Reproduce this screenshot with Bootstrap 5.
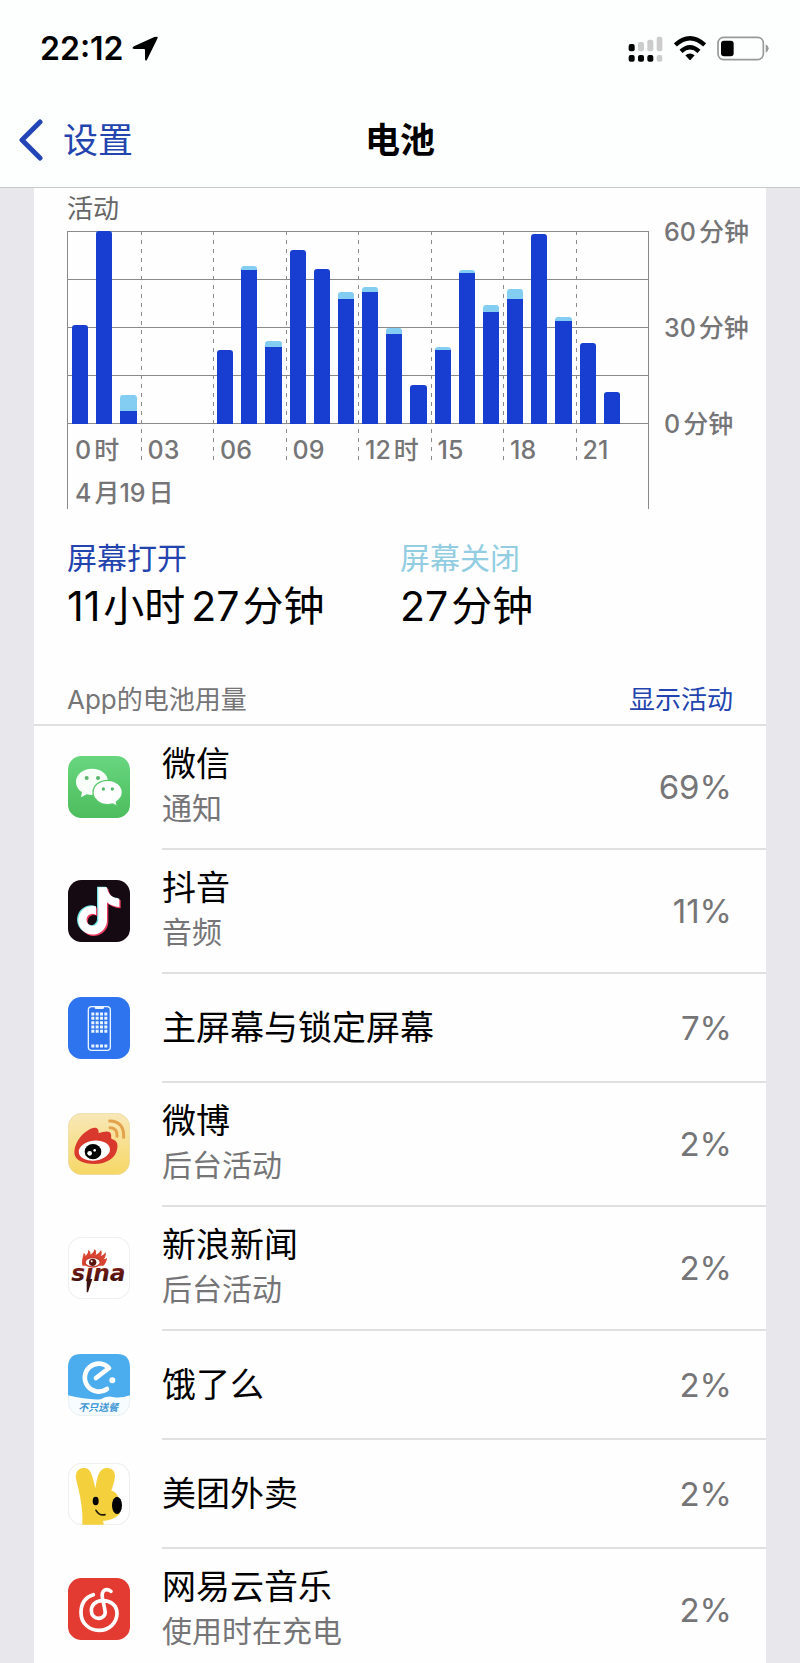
<!DOCTYPE html>
<html lang="zh-CN">
<head>
<meta charset="utf-8">
<meta name="viewport" content="width=device-width, initial-scale=1">
<title>电池</title>
<link href="https://cdn.jsdelivr.net/npm/bootstrap@5.3.0/dist/css/bootstrap.min.css" rel="stylesheet">
<style>
  :root { --on: #173ed0; --off: #84cdf2; --rule: #e0e0e1; --grid: #8a8a8c; --muted: #757577; --link: #2344ae; }
  body { background: #e8e8ec; color: #000; font-family: Inter, "Noto Sans CJK SC", sans-serif; font-size: 26px; line-height: 32px; }
  a { color: var(--link); text-decoration: none; }
  svg { display: block; flex: none; }
  .top-area { background: #fdfffe; border-bottom: 1px solid #c9c9ca; }
  .status { height: 93px; padding: 4px 31px 0 40px; }
  .status-icons { gap: 11px; }
  .clock { font-size: 32px; font-weight: 600; }
  .titlebar { height: 94px; padding: 0 19px; font-size: 35px; line-height: 46px; }
  .titlebar h1 { font-size: 35px; line-height: 46px; font-weight: 700; }
  .sheet { background: #fefefe; margin: 0 34px; }
  .dim { color: var(--muted); }
  .n { margin-right: 3px; }
  .n-in { margin-left: 6px; }

  .chart-wrap { padding-left: 33px; }
  .chart-title { padding-top: 3px; font-size: 26px; line-height: 36px; margin: 0 0 4px; color: #666; font-weight: 400; }
  .frame { border: solid var(--grid); border-width: 0 1px; }
  .slot { flex: 1 1 0; }
  .slot + .slot { background: repeating-linear-gradient(to bottom, var(--grid) 0 4px, transparent 4px 9px) left top / 1px 100% no-repeat; }
  .plot { height: 193px; background: repeating-linear-gradient(to bottom, var(--grid) 0 1px, transparent 1px 48px); }
  .hour { flex: 1 1 0; padding: 0 4px; height: 100%; }
  .bar { background: var(--off); border-radius: 3px 3px 0 0; overflow: hidden; }
  .bar i { display: block; background: var(--on); }
  .tick, .date, .scale { font-size: 25px; font-weight: 500; }
  .tick { padding: 13px 0 0 7px; line-height: 26px; white-space: nowrap; }
  .date { padding: 14px 0 0 7px; }
  .scale { width: 117px; padding: 28px 0 0 15px; gap: 64px; white-space: nowrap; }

  .stats { padding: 27px 33px 0; }
  .stat-name { font-size: 30px; line-height: 44px; }
  .stat-value { font-size: 41px; line-height: 52px; }
  .list-head { padding: 52px 33px 8px; border-bottom: 2px solid var(--rule); }
  .app { padding-left: 34px; gap: 32px; }
  .app > svg { margin-bottom: 2px; }
  .app .body { min-height: 109px; padding-right: 34px; border-bottom: 2px solid var(--rule); }
  .app.tall .body { min-height: 124px; }
  .app.tall .app-text { padding-bottom: 4px; }
  .app:last-child .body { min-height: 114px; padding-top: 8px; border-bottom: 0; }
  .app:last-child > svg { margin-top: 8px; }
  .app-name { font-size: 34px; line-height: 46px; }
  .app-note { font-size: 30px; line-height: 42px; color: var(--muted); }
  .share { font-size: 33px; line-height: 46px; color: var(--muted); }
</style>
</head>
<body>
<header class="top-area">
  <div class="status d-flex align-items-center">
    <span class="clock">22:12</span>
    <svg class="ms-2" width="26" height="26" viewBox="0 0 78 78"><path d="M74 2Q79 1 76 8L45 71Q41 78 39 70V42Q39 39 36 39H6Q-3 37 6 31L67 3Z"/></svg>
    <div class="status-icons ms-auto d-flex align-items-center">
      <svg width="35" height="27" viewBox="0 0 105 81">
        <g fill="#ccc"><rect x="30" y="21" width="18" height="28" rx="6"/><rect x="58" y="14" width="18" height="35" rx="6"/><rect x="86" y="5" width="17" height="44" rx="6"/><rect x="86" y="60" width="17" height="20" rx="6"/></g>
        <rect x="2" y="27" width="18" height="22" rx="6"/><rect x="2" y="60" width="18" height="20" rx="6"/><rect x="30" y="60" width="18" height="20" rx="6"/><rect x="58" y="60" width="18" height="20" rx="6"/>
      </svg>
      <svg width="32" height="25" viewBox="0 0 96 75"><g fill="none" stroke="#000" stroke-width="13"><path d="M4 27Q48-13 92 27"/><path d="M21 46Q48 21 75 46"/></g><path d="M34 58Q48 47 62 58L50 71Q48 73 46 71Z"/></svg>
      <svg width="52" height="25" viewBox="0 0 156 75"><rect x="3" y="4" width="136" height="67" rx="17" fill="none" stroke="#999" stroke-width="5"/><rect x="12" y="14" width="38" height="47" rx="9"/><path d="M146 25Q155 29 155 37T146 50Z" fill="#999"/></svg>
    </div>
  </div>
  <nav class="titlebar row g-0 align-items-center">
    <a href="#" class="col-4 d-flex align-items-center">
      <svg width="24" height="42" viewBox="0 0 24 42" class="me-3"><path d="M21 3 3 21 21 39" fill="none" stroke="#2344b4" stroke-width="5" stroke-linecap="round" stroke-linejoin="round"/></svg>
      <span class="ms-1">设置</span>
    </a>
    <h1 class="col-4 text-center m-0">电池</h1>
  </nav>
</header>

<main class="sheet">
  <section class="chart-wrap d-flex dim">
    <div class="flex-grow-1">
      <h2 class="chart-title">活动</h2>
      <div class="frame">
        <div class="d-flex">
          <div class="slot"><div class="plot d-flex">
            <div class="hour d-flex align-items-end"><div class="bar w-100" style="height:51.5%"><i style="height:100%"></i></div></div>
            <div class="hour d-flex align-items-end"><div class="bar w-100" style="height:100%"><i style="height:100%"></i></div></div>
            <div class="hour d-flex align-items-end"><div class="bar w-100 d-flex align-items-end" style="height:15%"><i class="w-100" style="height:44%"></i></div></div>
          </div><div class="tick"><span class="n">0</span>时</div></div>
          <div class="slot"><div class="plot"></div><div class="tick">03</div></div>
          <div class="slot"><div class="plot d-flex">
            <div class="hour d-flex align-items-end"><div class="bar w-100" style="height:38.3%"><i style="height:100%"></i></div></div>
            <div class="hour d-flex align-items-end"><div class="bar w-100 d-flex align-items-end" style="height:82%"><i class="w-100" style="height:97.6%"></i></div></div>
            <div class="hour d-flex align-items-end"><div class="bar w-100 d-flex align-items-end" style="height:43%"><i class="w-100" style="height:93%"></i></div></div>
          </div><div class="tick">06</div></div>
          <div class="slot"><div class="plot d-flex">
            <div class="hour d-flex align-items-end"><div class="bar w-100" style="height:90.2%"><i style="height:100%"></i></div></div>
            <div class="hour d-flex align-items-end"><div class="bar w-100" style="height:80.3%"><i style="height:100%"></i></div></div>
            <div class="hour d-flex align-items-end"><div class="bar w-100 d-flex align-items-end" style="height:68.3%"><i class="w-100" style="height:95%"></i></div></div>
          </div><div class="tick">09</div></div>
          <div class="slot"><div class="plot d-flex">
            <div class="hour d-flex align-items-end"><div class="bar w-100 d-flex align-items-end" style="height:70.8%"><i class="w-100" style="height:96.4%"></i></div></div>
            <div class="hour d-flex align-items-end"><div class="bar w-100 d-flex align-items-end" style="height:50%"><i class="w-100" style="height:93.4%"></i></div></div>
            <div class="hour d-flex align-items-end"><div class="bar w-100" style="height:20.2%"><i style="height:100%"></i></div></div>
          </div><div class="tick"><span class="n">12</span>时</div></div>
          <div class="slot"><div class="plot d-flex">
            <div class="hour d-flex align-items-end"><div class="bar w-100 d-flex align-items-end" style="height:39.8%"><i class="w-100" style="height:96%"></i></div></div>
            <div class="hour d-flex align-items-end"><div class="bar w-100 d-flex align-items-end" style="height:79.8%"><i class="w-100" style="height:98%"></i></div></div>
            <div class="hour d-flex align-items-end"><div class="bar w-100 d-flex align-items-end" style="height:61.8%"><i class="w-100" style="height:94.2%"></i></div></div>
          </div><div class="tick">15</div></div>
          <div class="slot"><div class="plot d-flex">
            <div class="hour d-flex align-items-end"><div class="bar w-100 d-flex align-items-end" style="height:69.7%"><i class="w-100" style="height:93.2%"></i></div></div>
            <div class="hour d-flex align-items-end"><div class="bar w-100" style="height:98.3%"><i style="height:100%"></i></div></div>
            <div class="hour d-flex align-items-end"><div class="bar w-100 d-flex align-items-end" style="height:55.6%"><i class="w-100" style="height:96.2%"></i></div></div>
          </div><div class="tick">18</div></div>
          <div class="slot"><div class="plot d-flex">
            <div class="hour d-flex align-items-end"><div class="bar w-100" style="height:42%"><i style="height:100%"></i></div></div>
            <div class="hour d-flex align-items-end"><div class="bar w-100" style="height:16.7%"><i style="height:100%"></i></div></div>
            <div class="hour"></div>
          </div><div class="tick">21</div></div>
        </div>
        <div class="date"><span class="n">4</span>月<span class="n">19</span>日</div>
      </div>
    </div>
    <div class="scale d-flex flex-column flex-shrink-0">
      <div><span class="n">60</span>分钟</div>
      <div><span class="n">30</span>分钟</div>
      <div><span class="n">0</span>分钟</div>
    </div>
  </section>

  <section class="stats row g-0">
    <div class="col-6">
      <div class="stat-name" style="color:var(--link)">屏幕打开</div>
      <div class="stat-value"><span class="n">11</span>小时<span class="n n-in">27</span>分钟</div>
    </div>
    <div class="col-6">
      <div class="stat-name" style="color:#92cde2">屏幕关闭</div>
      <div class="stat-value"><span class="n">27</span>分钟</div>
    </div>
  </section>

  <div class="list-head d-flex justify-content-between">
    <span class="dim">App的电池用量</span>
    <a href="#">显示活动</a>
  </div>

  <ul class="list-unstyled m-0">
    <li class="app tall d-flex align-items-center">
      <svg width="62" height="62" viewBox="0 0 186 186">
        <defs><linearGradient id="green" x2="0" y2="1"><stop stop-color="#67d67f"/><stop offset="1" stop-color="#4dbd5d"/></linearGradient></defs>
        <rect width="186" height="186" rx="40" fill="url(#green)"/>
        <path d="M72 38C45 38 24 55 24 77c0 14 7 24 18 31l-3 16 17-9q8 2 16 2c27 0 48-17 48-40S99 38 72 38Z" fill="#f8fff9"/>
        <path d="M119 73c-25 0-44 16-44 36s19 37 44 37q8 0 15-2l14 7-3-13c11-7 18-17 18-29 0-20-19-36-44-36Z" fill="#fff" stroke="#59c86c" stroke-width="4"/>
        <g fill="#58b76b"><circle cx="56" cy="66" r="6"/><circle cx="90" cy="66" r="6"/><circle cx="106" cy="99" r="5"/><circle cx="133" cy="99" r="5"/></g>
      </svg>
      <div class="body flex-grow-1 d-flex align-items-center justify-content-between">
        <div class="app-text"><div class="app-name">微信</div><div class="app-note">通知</div></div><span class="share">69%</span>
      </div>
    </li>
    <li class="app tall d-flex align-items-center">
      <svg width="62" height="62" viewBox="0 0 186 186">
        <defs><path id="note" d="M91 22H117C120 44 134 55 154 56V81Q132 80 117 67V122A43 43 0 1 1 84 79V105A18 18 0 1 0 91 122Z"/></defs>
        <rect width="186" height="186" rx="40" fill="#150912"/>
        <use href="#note" x="-4" y="-2" fill="#6fe3e4"/><use href="#note" x="4" y="4" fill="#ee3c61"/><use href="#note" fill="#fff"/>
      </svg>
      <div class="body flex-grow-1 d-flex align-items-center justify-content-between">
        <div class="app-text"><div class="app-name">抖音</div><div class="app-note">音频</div></div><span class="share">11%</span>
      </div>
    </li>
    <li class="app d-flex align-items-center">
      <svg width="62" height="62" viewBox="0 0 186 186">
        <rect width="186" height="186" rx="40" fill="#2e74ef"/>
        <rect x="61" y="29" width="66" height="131" rx="10" fill="none" stroke="#e9f4ff" stroke-width="4"/>
        <path d="M80 28H108V33Q108 36 104 36H84Q80 36 80 33Z" fill="#e9f4ff"/>
        <path d="M70 51H118M70 64H118M70 77H118M70 90H118M70 103H118M70 147H118" stroke="#e9f4ff" stroke-width="9" stroke-dasharray="9 4"/>
      </svg>
      <div class="body flex-grow-1 d-flex align-items-center justify-content-between">
        <div class="app-name">主屏幕与锁定屏幕</div><span class="share">7%</span>
      </div>
    </li>
    <li class="app tall d-flex align-items-center">
      <svg width="62" height="62" viewBox="0 0 186 186">
        <defs><linearGradient id="sand" x2="0" y2="1"><stop stop-color="#f8e8b8"/><stop offset="1" stop-color="#f6d765"/></linearGradient></defs>
        <rect x="1" y="1" width="184" height="184" rx="40" fill="url(#sand)" stroke="#e6d7a2" stroke-width="2"/>
        <path d="M19 117C20 91 38 65 58 53C75 42 93 38 92 61C107 56 126 51 129 64C131 72 127 76 133 79C146 83 150 92 148 105C145 135 115 153 80 153C45 153 18 141 19 117Z" fill="#d9382c"/>
        <ellipse cx="79" cy="113" rx="47" ry="30" fill="#fff" transform="rotate(-7 79 113)"/>
        <ellipse cx="75" cy="116" rx="25" ry="23"/><circle cx="65" cy="121" r="7" fill="#fff"/><circle cx="80" cy="112" r="4" fill="#fff"/>
        <g fill="none" stroke="#e3a34d" stroke-width="9" stroke-linecap="round"><path d="M125 24Q169 25 167 73"/><path d="M126 44Q149 45 147 70"/></g>
      </svg>
      <div class="body flex-grow-1 d-flex align-items-center justify-content-between">
        <div class="app-text"><div class="app-name">微博</div><div class="app-note">后台活动</div></div><span class="share">2%</span>
      </div>
    </li>
    <li class="app tall d-flex align-items-center">
      <svg width="62" height="62" viewBox="0 0 186 186">
        <defs><linearGradient id="ember" x2="0" y2="1"><stop stop-color="#a3231d"/><stop offset="1" stop-color="#2b0d0b"/></linearGradient></defs>
        <rect x="1" y="1" width="184" height="184" rx="40" fill="#fff" stroke="#e4e4e6" stroke-width="2"/>
        <text x="10" y="131" font-family="DejaVu Sans, sans-serif" font-size="70" font-weight="700" font-style="italic" fill="url(#ember)">sina</text>
        <path d="M56 126H73L60 166H56Z" fill="#3a1210"/>
        <path d="M43 86C40 66 46 60 47 47Q53 51 53 57Q62 48 61 38Q69 44 68 53Q78 47 80 36Q87 44 83 54Q94 50 99 39Q104 49 98 57Q107 54 113 46Q115 58 107 67Q114 66 117 62Q116 78 106 86Z" fill="#d94432"/>
        <ellipse cx="74" cy="76" rx="23" ry="14" fill="#fff" stroke="#c73728" stroke-width="4"/><circle cx="74" cy="76" r="11" fill="#5b1712"/><circle cx="71" cy="73" r="3" fill="#fff"/>
      </svg>
      <div class="body flex-grow-1 d-flex align-items-center justify-content-between">
        <div class="app-text"><div class="app-name">新浪新闻</div><div class="app-note">后台活动</div></div><span class="share">2%</span>
      </div>
    </li>
    <li class="app d-flex align-items-center">
      <svg width="62" height="62" viewBox="0 0 186 186">
        <rect x="1" y="1" width="184" height="184" rx="40" fill="#f6fcff" stroke="#e0e9ee" stroke-width="2"/>
        <path d="M0 124V40Q0 0 40 0H146Q186 0 186 40V124Q155 134 135 129T98 136Q55 138 0 124Z" fill="#4badee"/>
        <path d="M117 105A42 42 0 1 1 123 42L84 72" fill="none" stroke="#fff" stroke-width="14" stroke-linecap="round" stroke-linejoin="round"/><circle cx="133" cy="79" r="9" fill="#fff"/>
        <text x="31" y="172" font-family="Noto Sans CJK SC, sans-serif" font-size="30" font-weight="700" font-style="italic" fill="#3b95d5">不只送餐</text>
      </svg>
      <div class="body flex-grow-1 d-flex align-items-center justify-content-between">
        <div class="app-name">饿了么</div><span class="share">2%</span>
      </div>
    </li>
    <li class="app d-flex align-items-center">
      <svg width="62" height="62" viewBox="0 0 186 186">
        <rect x="1" y="1" width="184" height="184" rx="40" fill="#fff" stroke="#e2e2e4" stroke-width="2"/>
        <path d="M43 185C45 135 37 100 25 52C19 29 31 15 47 15C68 15 72 32 82 76C88 38 94 15 117 15C137 15 145 31 139 53L130 83Q146 86 151 104L155 153Q137 172 104 174Q108 179 107 185Z" fill="#f4d13c"/>
        <ellipse cx="147" cy="127" rx="15" ry="26"/><ellipse cx="83" cy="114" rx="9" ry="13"/>
        <path d="M84 142Q94 159 111 155" fill="none" stroke="#201b06" stroke-width="5" stroke-linecap="round"/>
      </svg>
      <div class="body flex-grow-1 d-flex align-items-center justify-content-between">
        <div class="app-name">美团外卖</div><span class="share">2%</span>
      </div>
    </li>
    <li class="app tall d-flex align-items-center">
      <svg width="62" height="62" viewBox="0 0 186 186">
        <rect width="186" height="186" rx="40" fill="#e33a32"/>
        <path d="M76 50C50 58 39 80 39 104C39 136 64 157 93 157C124 157 147 134 147 106C147 82 128 68 104 68C82 68 70 82 70 98C70 112 80 121 92 121C106 121 114 110 111 97L103 58C100 38 114 28 129 40" fill="none" stroke="#fff" stroke-width="11" stroke-linecap="round"/>
      </svg>
      <div class="body flex-grow-1 d-flex align-items-center justify-content-between">
        <div class="app-text"><div class="app-name">网易云音乐</div><div class="app-note">使用时在充电</div></div><span class="share">2%</span>
      </div>
    </li>
  </ul>
</main>
<script src="https://cdn.jsdelivr.net/npm/bootstrap@5.3.0/dist/js/bootstrap.bundle.min.js"></script>
</body>
</html>
